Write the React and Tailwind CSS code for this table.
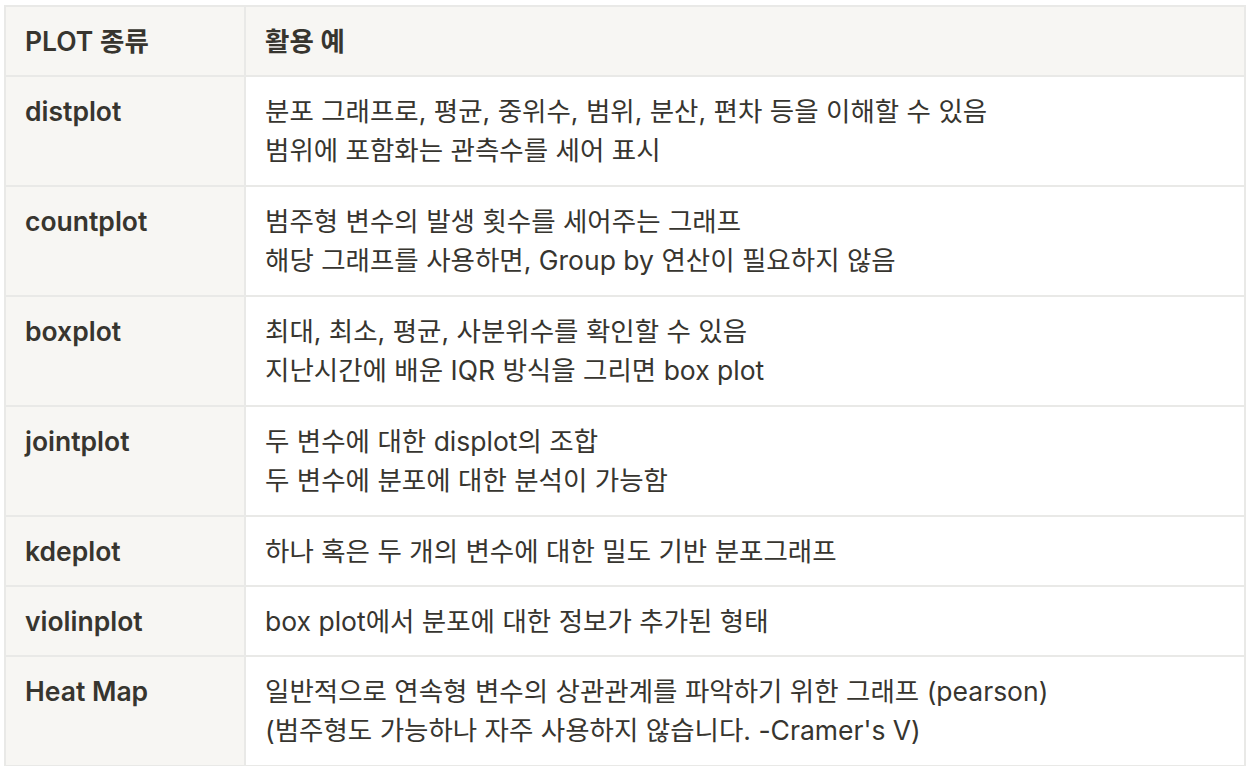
const rows = [
  {
    name: "distplot",
    lines: [
      "분포 그래프로, 평균, 중위수, 범위, 분산, 편차 등을 이해할 수 있음",
      "범위에 포함화는 관측수를 세어 표시",
    ],
  },
  {
    name: "countplot",
    lines: [
      "범주형 변수의 발생 횟수를 세어주는 그래프",
      "해당 그래프를 사용하면, Group by 연산이 필요하지 않음",
    ],
  },
  {
    name: "boxplot",
    lines: [
      "최대, 최소, 평균, 사분위수를 확인할 수 있음",
      "지난시간에 배운 IQR 방식을 그리면 box plot",
    ],
  },
  {
    name: "jointplot",
    lines: ["두 변수에 대한 displot의 조합", "두 변수에 분포에 대한 분석이 가능함"],
  },
  { name: "kdeplot", lines: ["하나 혹은 두 개의 변수에 대한 밀도 기반 분포그래프"] },
  { name: "violinplot", lines: ["box plot에서 분포에 대한 정보가 추가된 형태"] },
  {
    name: "Heat Map",
    lines: [
      "일반적으로 연속형 변수의 상관관계를 파악하기 위한 그래프 (pearson)",
      "(범주형도 가능하나 자주 사용하지 않습니다. -Cramer's V)",
    ],
  },
];

export default function App() {
  return (
    <div
      className="min-h-screen bg-white pl-[4px] pr-[6px] pt-[5px] text-[#37352f]"
      style={{ fontFamily: 'Inter, "Noto Sans CJK KR", sans-serif' }}
    >
      <table className="w-full border-collapse text-[26.5px] leading-[39px]">
        <thead>
          <tr className="bg-[#f7f6f3]">
            <th className="w-[240px] border-2 border-[#e9e9e7] px-[19px] pb-[14px] pt-[15px] text-left font-semibold">
              PLOT 종류
            </th>
            <th className="border-2 border-[#e9e9e7] px-[19px] pb-[14px] pt-[15px] text-left font-semibold">
              활용 예
            </th>
          </tr>
        </thead>
        <tbody>
          {rows.map((r) => {
            const pad = r.lines.length > 1 ? "pt-[15px] pb-[15px]" : "pt-[15px] pb-[14px]";
            return (
              <tr key={r.name}>
                <td
                  className={`border-2 border-[#e9e9e7] bg-[#f7f6f3] px-[19px] align-top font-semibold ${pad}`}
                >
                  {r.name}
                </td>
                <td className={`border-2 border-[#e9e9e7] bg-white px-[19px] align-top ${pad}`}>
                  {r.lines.map((l) => (
                    <div key={l}>{l}</div>
                  ))}
                </td>
              </tr>
            );
          })}
        </tbody>
      </table>
    </div>
  );
}
